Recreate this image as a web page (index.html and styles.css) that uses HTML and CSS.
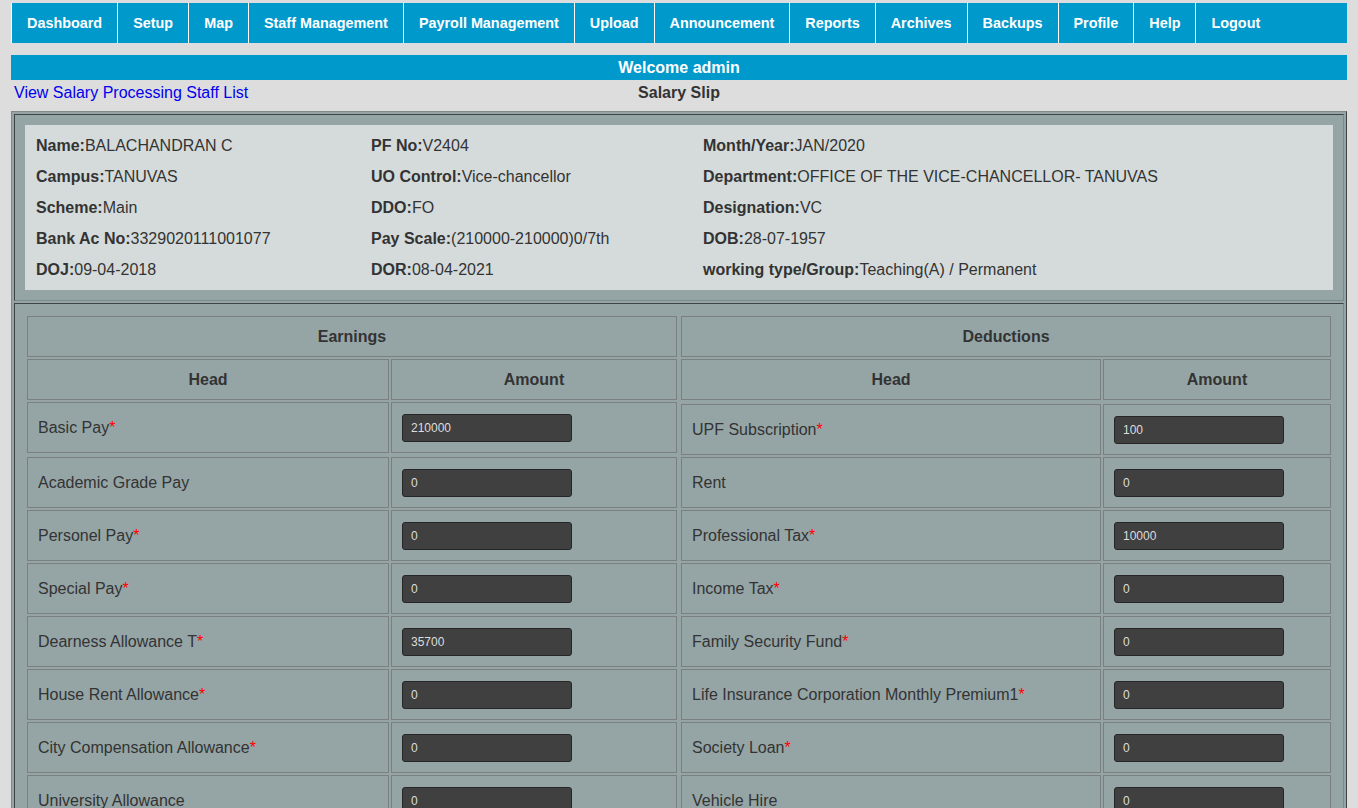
FILE: index.html
```html
<!DOCTYPE html>
<html lang="en">
<head>
<meta charset="utf-8">
<title>Salary Slip</title>
<link rel="stylesheet" href="styles.css">
</head>
<body>
<div class="page">
  <nav class="topnav">
    <a href="#">Dashboard</a>
    <a href="#">Setup</a>
    <a href="#">Map</a>
    <a href="#">Staff Management</a>
    <a href="#">Payroll Management</a>
    <a href="#">Upload</a>
    <a href="#">Announcement</a>
    <a href="#">Reports</a>
    <a href="#">Archives</a>
    <a href="#">Backups</a>
    <a href="#">Profile</a>
    <a href="#">Help</a>
    <a href="#">Logout</a>
  </nav>

  <div class="welcome">Welcome admin</div>

  <div class="subhead">
    <a class="back-link" href="#">View Salary Processing Staff List</a>
    <h1 class="title">Salary Slip</h1>
    <span></span>
  </div>

  <div class="slip">
    <div class="slip-cell">
      <div class="info">
        <div class="info-item"><b>Name:</b>BALACHANDRAN C</div>
        <div class="info-item"><b>PF No:</b>V2404</div>
        <div class="info-item"><b>Month/Year:</b>JAN/2020</div>

        <div class="info-item"><b>Campus:</b>TANUVAS</div>
        <div class="info-item"><b>UO Control:</b>Vice-chancellor</div>
        <div class="info-item"><b>Department:</b>OFFICE OF THE VICE-CHANCELLOR- TANUVAS</div>

        <div class="info-item"><b>Scheme:</b>Main</div>
        <div class="info-item"><b>DDO:</b>FO</div>
        <div class="info-item"><b>Designation:</b>VC</div>

        <div class="info-item"><b>Bank Ac No:</b>3329020111001077</div>
        <div class="info-item"><b>Pay Scale:</b>(210000-210000)0/7th</div>
        <div class="info-item"><b>DOB:</b>28-07-1957</div>

        <div class="info-item"><b>DOJ:</b>09-04-2018</div>
        <div class="info-item"><b>DOR:</b>08-04-2021</div>
        <div class="info-item"><b>working type/Group:</b>Teaching(A) / Permanent</div>
      </div>
    </div>

    <div class="slip-cell slip-body">
      <div class="ledger ledger-earn">
        <div class="lrow"><div class="lcell lhead span2">Earnings</div></div>
        <div class="lrow"><div class="lcell lhead">Head</div><div class="lcell lhead">Amount</div></div>
        <div class="lrow data"><div class="lcell">Basic Pay<span class="req">*</span></div><div class="lcell"><input class="amt" type="text" value="210000"></div></div>
        <div class="spacer"></div>
        <div class="lrow data"><div class="lcell">Academic Grade Pay</div><div class="lcell"><input class="amt" type="text" value="0"></div></div>
        <div class="lrow data"><div class="lcell">Personel Pay<span class="req">*</span></div><div class="lcell"><input class="amt" type="text" value="0"></div></div>
        <div class="lrow data"><div class="lcell">Special Pay<span class="req">*</span></div><div class="lcell"><input class="amt" type="text" value="0"></div></div>
        <div class="lrow data"><div class="lcell">Dearness Allowance T<span class="req">*</span></div><div class="lcell"><input class="amt" type="text" value="35700"></div></div>
        <div class="lrow data"><div class="lcell">House Rent Allowance<span class="req">*</span></div><div class="lcell"><input class="amt" type="text" value="0"></div></div>
        <div class="lrow data"><div class="lcell">City Compensation Allowance<span class="req">*</span></div><div class="lcell"><input class="amt" type="text" value="0"></div></div>
        <div class="lrow data"><div class="lcell">University Allowance</div><div class="lcell"><input class="amt" type="text" value="0"></div></div>
      </div>

      <div class="ledger ledger-ded">
        <div class="lrow"><div class="lcell lhead span2">Deductions</div></div>
        <div class="lrow"><div class="lcell lhead">Head</div><div class="lcell lhead">Amount</div></div>
        <div class="spacer"></div>
        <div class="lrow data"><div class="lcell">UPF Subscription<span class="req">*</span></div><div class="lcell"><input class="amt" type="text" value="100"></div></div>
        <div class="lrow data"><div class="lcell">Rent</div><div class="lcell"><input class="amt" type="text" value="0"></div></div>
        <div class="lrow data"><div class="lcell">Professional Tax<span class="req">*</span></div><div class="lcell"><input class="amt" type="text" value="10000"></div></div>
        <div class="lrow data"><div class="lcell">Income Tax<span class="req">*</span></div><div class="lcell"><input class="amt" type="text" value="0"></div></div>
        <div class="lrow data"><div class="lcell">Family Security Fund<span class="req">*</span></div><div class="lcell"><input class="amt" type="text" value="0"></div></div>
        <div class="lrow data"><div class="lcell">Life Insurance Corporation Monthly Premium1<span class="req">*</span></div><div class="lcell"><input class="amt" type="text" value="0"></div></div>
        <div class="lrow data"><div class="lcell">Society Loan<span class="req">*</span></div><div class="lcell"><input class="amt" type="text" value="0"></div></div>
        <div class="lrow data"><div class="lcell">Vehicle Hire</div><div class="lcell"><input class="amt" type="text" value="0"></div></div>
      </div>
    </div>
  </div>
</div>
</body>
</html>
```

FILE: styles.css
```css
html {
  scrollbar-width: none;
}

body {
  margin: 0;
  background: #dddddd;
  font-family: "Liberation Sans", Arial, sans-serif;
  font-size: 16px;
  color: #333333;
}

.page {
  padding: 3px 11px 0 11px;
}

/* top navigation */
.topnav {
  display: flex;
  height: 40px;
  background: #0099cc;
}

.topnav a {
  display: block;
  padding: 0 15px;
  border-left: 1px solid #ffffff;
  line-height: 40px;
  font-size: 14.4px;
  font-weight: bold;
  color: #ffffff;
  text-decoration: none;
  white-space: nowrap;
}

.welcome {
  margin-top: 12px;
  height: 25px;
  line-height: 25px;
  background: #0099cc;
  color: #ffffff;
  font-weight: bold;
  text-align: center;
}

.subhead {
  display: grid;
  grid-template-columns: 1fr auto 1fr;
  height: 31px;
  line-height: 25px;
}

.back-link {
  padding-left: 3px;
  color: #0000ee;
  text-decoration: none;
}

.title {
  margin: 0;
  font-size: 16px;
  font-weight: bold;
  color: #333333;
}

/* outer slip table */
.slip {
  display: flex;
  flex-direction: column;
  gap: 2px;
  padding: 2px;
  background: #95a5a6;
  border: 1px solid;
  border-color: #7e8b8b #3e4444 #3e4444 #7e8b8b;
}

.slip-cell {
  padding: 10px;
  border: 1px solid;
  border-color: #3e4444 #7e8b8b #7e8b8b #3e4444;
}

/* employee info */
.info {
  display: grid;
  grid-template-columns: 335px 332px 1fr;
  padding: 5px 11px;
  background: #d5dbdb;
}

.info-item {
  height: 31px;
  line-height: 31px;
  white-space: nowrap;
}

.info-item b {
  font-weight: bold;
}

/* earnings / deductions */
.slip-body {
  display: grid;
  grid-template-columns: 1fr 1fr;
}

.ledger {
  display: flex;
  flex-direction: column;
  gap: 2px;
  padding: 2px;
}

.lrow {
  display: grid;
  gap: 2px;
}

.ledger-earn .lrow {
  grid-template-columns: 362px 286px;
}

.ledger-ded .lrow {
  grid-template-columns: 420px 228px;
}

.spacer {
  height: 0;
}

.lcell {
  display: flex;
  align-items: center;
  height: 41px;
  padding: 0 10px;
  border: 1px solid #7b7f7f;
  box-sizing: border-box;
  white-space: nowrap;
}

.lrow.data .lcell {
  height: 51px;
}

.lhead {
  justify-content: center;
  font-weight: bold;
}

.span2 {
  grid-column: 1 / span 2;
}

.req {
  color: #ff0000;
}

.amt {
  width: 170px;
  height: 28px;
  box-sizing: border-box;
  margin: 0;
  padding: 0 8px;
  background: #404040;
  border: 1px solid #262626;
  border-radius: 3px;
  color: #dddddd;
  font-family: "Liberation Sans", Arial, sans-serif;
  font-size: 12px;
}
```
